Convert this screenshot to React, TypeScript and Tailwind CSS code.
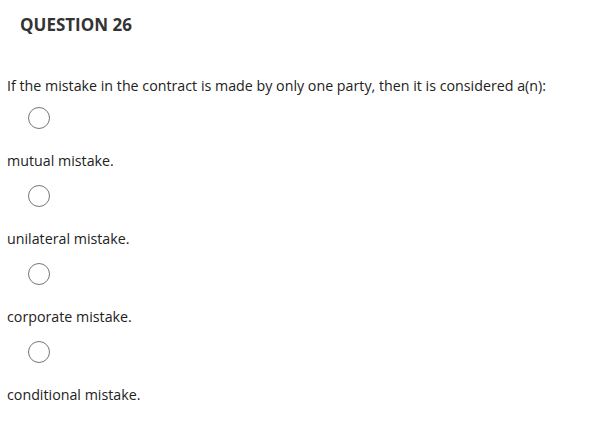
const options = [
  "mutual mistake.",
  "unilateral mistake.",
  "corporate mistake.",
  "conditional mistake.",
];

const App = () => {
  return (
    <div
      className="w-[606px] h-[443px] bg-white text-[#333333]"
      style={{ fontFamily: '"Open Sans", sans-serif' }}
    >
      <div className="pl-[20px] pt-[13px]">
        <h2 className="text-[17px] font-bold leading-[23px]">QUESTION 26</h2>
      </div>
      <p className="pl-[7px] mt-[40px] text-[14.25px] leading-[19px] text-[#222222]">
        If the mistake in the contract is made by only one party, then it is considered a(n):
      </p>
      <ul className="mt-[12px]">
        {options.map((option) => (
          <li key={option} className="h-[78px]">
            <div className="pl-[28px]">
              <div className="w-[22px] h-[22px] rounded-full border border-[#767676] bg-white" />
            </div>
            <p className="pl-[7px] mt-[22px] text-[14.25px] leading-[19px] text-[#222222]">
              {option}
            </p>
          </li>
        ))}
      </ul>
    </div>
  );
};

export default App;
